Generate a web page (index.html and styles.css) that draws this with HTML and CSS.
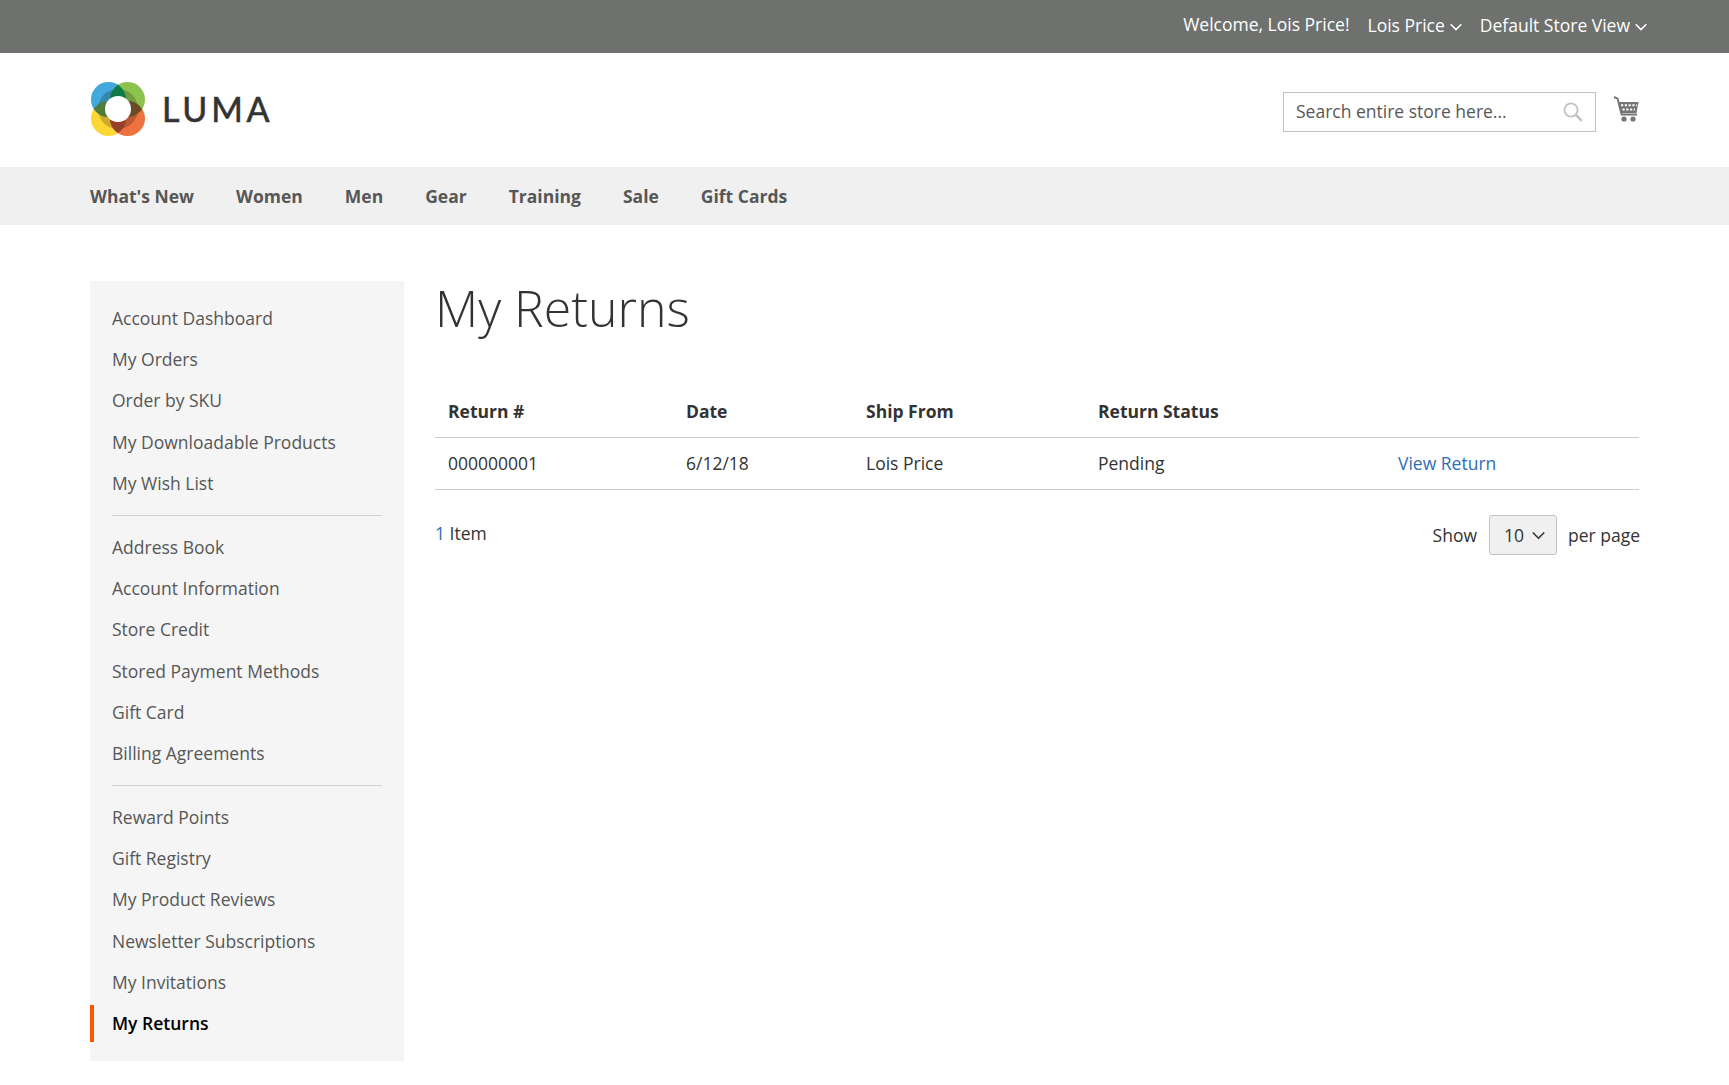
FILE: index.html
```html
<!DOCTYPE html>
<html>
<head>
    <title>My Returns</title>
    <link rel="stylesheet" href="styles.css">
</head>
<body>
    <div class="topbar">
        <div class="topbar-inner">
            <span class="welcome">Welcome, Lois Price!</span>
            <span class="switch">Lois Price
                <svg class="chev" viewBox="0 0 12 8"><path d="M.7 1.2l5.3 5.3 5.3-5.3" fill="none" stroke="#fff" stroke-width="1.6"/></svg>
            </span>
            <span class="switch">Default Store View
                <svg class="chev" viewBox="0 0 12 8"><path d="M.7 1.2l5.3 5.3 5.3-5.3" fill="none" stroke="#fff" stroke-width="1.6"/></svg>
            </span>
        </div>
    </div>

    <header class="header">
        <div class="logo">
            <svg class="logo-mark" viewBox="0 0 54 54">
                <defs>
                    <clipPath id="clipBlue"><circle cx="17.5" cy="17.5" r="17.5"/></clipPath>
                    <clipPath id="clipOrange"><circle cx="36.5" cy="36.5" r="17.5"/></clipPath>
                </defs>
                <circle cx="17.5" cy="36.5" r="17.5" fill="#fdd835"/>
                <circle cx="36.5" cy="36.5" r="17.5" fill="#ee7140"/>
                <circle cx="17.5" cy="17.5" r="17.5" fill="#41a9dc"/>
                <circle cx="36.5" cy="17.5" r="17.5" fill="#8cc34f"/>
                <circle cx="27" cy="27" r="20" fill="#000" opacity=".2"/>
                <g clip-path="url(#clipBlue)">
                    <circle cx="36.5" cy="17.5" r="17.5" fill="#0f7a48"/>
                    <circle cx="17.5" cy="36.5" r="17.5" fill="#4e7d3a"/>
                </g>
                <g clip-path="url(#clipOrange)">
                    <circle cx="17.5" cy="36.5" r="17.5" fill="#98412a"/>
                    <circle cx="36.5" cy="17.5" r="17.5" fill="#6d4a24"/>
                </g>
                <circle cx="27" cy="27" r="13" fill="#fff"/>
            </svg>
            <span class="logo-text">LUMA</span>
        </div>
        <div class="header-right">
            <div class="search">
                <span class="search-text">Search entire store here...</span>
                <svg class="search-icon" viewBox="0 0 20 20"><circle cx="8" cy="8" r="6.6" fill="none" stroke="#c2c2c2" stroke-width="1.8"/><path d="M12.8 12.8l6 6" stroke="#c2c2c2" stroke-width="2.4"/></svg>
            </div>
            <svg class="cart" viewBox="0 0 26 26">
                <path d="M1 1l3.6 1.6L8.6 18.5H24" fill="none" stroke="#757575" stroke-width="2"/>
                <path d="M5 6H25.5L23.5 17H8z" fill="#757575"/>
                <path d="M8 9.2H24M9.5 13.4H22" stroke="#fff" stroke-width="2" stroke-dasharray="2.2 1.6"/>
                <circle cx="11" cy="23" r="2.6" fill="#757575"/>
                <circle cx="20" cy="23" r="2.6" fill="#757575"/>
            </svg>
        </div>
    </header>

    <nav class="nav">
        <a>What's New</a>
        <a>Women</a>
        <a>Men</a>
        <a>Gear</a>
        <a>Training</a>
        <a>Sale</a>
        <a>Gift Cards</a>
    </nav>

    <div class="columns">
        <aside class="sidebar">
            <ul class="menu">
                <li>Account Dashboard</li>
                <li>My Orders</li>
                <li>Order by SKU</li>
                <li>My Downloadable Products</li>
                <li>My Wish List</li>
            </ul>
            <ul class="menu">
                <li>Address Book</li>
                <li>Account Information</li>
                <li>Store Credit</li>
                <li>Stored Payment Methods</li>
                <li>Gift Card</li>
                <li>Billing Agreements</li>
            </ul>
            <ul class="menu">
                <li>Reward Points</li>
                <li>Gift Registry</li>
                <li>My Product Reviews</li>
                <li>Newsletter Subscriptions</li>
                <li>My Invitations</li>
                <li class="current">My Returns</li>
            </ul>
        </aside>

        <main class="main">
            <h1 class="title">My Returns</h1>
            <table class="returns">
                <thead>
                    <tr>
                        <th class="col-id">Return #</th>
                        <th class="col-date">Date</th>
                        <th class="col-from">Ship From</th>
                        <th class="col-status">Return Status</th>
                        <th></th>
                    </tr>
                </thead>
                <tbody>
                    <tr>
                        <td>000000001</td>
                        <td>6/12/18</td>
                        <td>Lois Price</td>
                        <td>Pending</td>
                        <td><a class="link">View Return</a></td>
                    </tr>
                </tbody>
            </table>
            <div class="toolbar">
                <div class="amount"><span class="amount-num">1</span> Item</div>
                <div class="limiter">
                    <span>Show</span>
                    <span class="select">10
                        <svg class="select-chev" viewBox="0 0 12 8"><path d="M.7 1.2l5.3 5.3 5.3-5.3" fill="none" stroke="#333" stroke-width="1.5"/></svg>
                    </span>
                    <span>per page</span>
                </div>
            </div>
        </main>
    </div>
</body>
</html>
```

FILE: styles.css
```css
* {
    box-sizing: border-box;
}

body {
    margin: 0;
    background: #fff;
    color: #333;
    font-family: "Open Sans", sans-serif;
    font-size: 17.5px;
}

.topbar {
    background: #6e716e;
    color: #fff;
    height: 53px;
    padding: 0 82px 0 90px;
}

.topbar-inner {
    display: flex;
    justify-content: flex-end;
    align-items: center;
    gap: 18px;
    height: 50px;
}

.welcome {
    margin-top: -2px;
}

.switch {
    display: flex;
    align-items: center;
    gap: 5px;
}

.chev {
    width: 12px;
    height: 8px;
    margin-top: 3px;
}

.header {
    display: flex;
    justify-content: space-between;
    align-items: center;
    height: 114px;
    padding: 0 90px;
}

.logo {
    display: flex;
    align-items: center;
    gap: 17px;
    margin: -3px 0 0 1px;
}

.logo-mark {
    width: 54px;
    height: 54px;
    margin-top: 1px;
}

.logo-text {
    font-family: "Lato", sans-serif;
    font-size: 34px;
    letter-spacing: 3.8px;
    color: #333;
    -webkit-text-stroke: 0.6px #333;
}

.header-right {
    display: flex;
    align-items: center;
    gap: 17px;
}

.search {
    display: flex;
    justify-content: space-between;
    align-items: center;
    width: 313px;
    height: 40px;
    margin-top: 3px;
    padding: 0 12px;
    border: 1px solid #c2c2c2;
    color: #575757;
}

.search-text {
    margin-top: -2px;
}

.search-icon {
    width: 20px;
    height: 20px;
    margin-top: 1px;
}

.cart {
    width: 26px;
    height: 26px;
    margin-top: -2px;
}

.nav {
    display: flex;
    align-items: center;
    gap: 42px;
    height: 58px;
    padding: 0 90px;
    background: #f0f0f0;
    font-weight: 700;
    color: #575757;
}

.columns {
    display: flex;
    align-items: flex-start;
    gap: 31px;
    padding: 56px 90px 0;
}

.sidebar {
    flex: none;
    width: 314px;
    padding: 17px 0 17px;
    background: #f5f5f5;
}

.menu {
    list-style: none;
    margin: 0 22px;
    padding: 0 0 11px;
    border-bottom: 1px solid #d1d1d1;
}

.menu + .menu {
    padding-top: 11px;
}

.menu:last-child {
    border-bottom: 0;
    padding-bottom: 0;
}

.menu li {
    height: 41.2px;
    line-height: 41.2px;
    color: #575757;
}

.menu .current {
    position: relative;
    color: #000;
    font-weight: 600;
}

.menu .current::before {
    content: "";
    position: absolute;
    left: -22px;
    top: 2px;
    width: 4px;
    height: 37px;
    background: #ff5501;
}

.main {
    flex: 1;
}

.title {
    margin: -1px 0 0;
    font-size: 50px;
    font-weight: 300;
    line-height: 56px;
    height: 105px;
}

.returns {
    width: 100%;
    border-collapse: collapse;
    table-layout: fixed;
}

.returns th {
    height: 52px;
    padding: 0 13px;
    font-weight: 700;
    text-align: left;
    border-bottom: 1px solid #ccc;
}

.returns td {
    height: 52px;
    padding: 0 13px;
    border-bottom: 1px solid #ccc;
}

.col-id {
    width: 238px;
}

.col-date {
    width: 180px;
}

.col-from {
    width: 232px;
}

.col-status {
    width: 300px;
}

.link {
    color: #2f6fb3;
}

.toolbar {
    display: flex;
    justify-content: space-between;
    align-items: flex-start;
    margin-top: 25px;
}

.amount {
    margin-top: 6px;
}

.amount-num {
    color: #2f6fb3;
}

.limiter {
    display: flex;
    align-items: center;
    gap: 12px;
    margin-right: -1px;
}

.select {
    display: flex;
    align-items: center;
    gap: 8px;
    width: 68px;
    height: 40px;
    margin-right: -1px;
    padding: 0 0 0 14px;
    background: #f0f0f0;
    border: 1px solid #c2c2c2;
    border-radius: 3px;
}

.select-chev {
    width: 13px;
    height: 9px;
    margin-top: 2px;
}
```
